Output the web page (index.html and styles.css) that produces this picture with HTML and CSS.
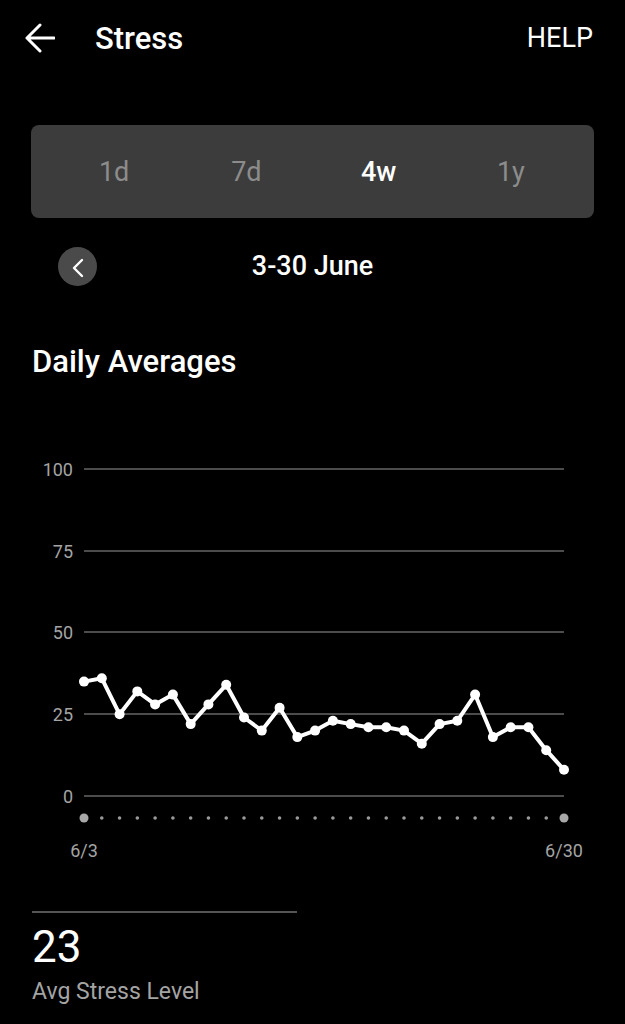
FILE: index.html
```html
<!DOCTYPE html>
<html lang="en">
<head>
  <meta charset="UTF-8" />
  <title>Stress</title>
  <link rel="stylesheet" href="styles.css">
</head>
<body>
  <header class="topbar">
    <svg class="back-icon" width="31" height="30" viewBox="0 0 31 30">
      <path d="M30 15H3M16 2L3 15l13 13" fill="none" stroke="#fff" stroke-width="3" stroke-linecap="round" stroke-linejoin="round" />
    </svg>
    <h1 class="title">Stress</h1>
    <span class="help">HELP</span>
  </header>

  <div class="range-tabs">
    <span class="tab">1d</span>
    <span class="tab">7d</span>
    <span class="tab active">4w</span>
    <span class="tab">1y</span>
  </div>

  <div class="date-nav">
    <span class="prev">
      <svg width="14" height="20" viewBox="0 0 14 20">
        <path d="M11 2L3 10l8 8" fill="none" stroke="#fff" stroke-width="2.4" stroke-linecap="round" stroke-linejoin="round" />
      </svg>
    </span>
    <span class="date-label">3-30 June</span>
  </div>

  <h2 class="section-title">Daily Averages</h2>

  <svg class="chart" width="625" height="480" viewBox="0 0 625 480">
    <defs>
      <marker id="pt" markerUnits="userSpaceOnUse" markerWidth="12" markerHeight="12" refX="6" refY="6">
        <circle cx="6" cy="6" r="5" fill="#fff" />
      </marker>
    </defs>
    <g class="grid">
      <line x1="84" y1="69" x2="564" y2="69" />
      <line x1="84" y1="151" x2="564" y2="151" />
      <line x1="84" y1="232" x2="564" y2="232" />
      <line x1="84" y1="314" x2="564" y2="314" />
      <line x1="84" y1="396" x2="564" y2="396" />
    </g>
    <g class="axis">
      <text x="73" y="75.5" text-anchor="end">100</text>
      <text x="73" y="157.5" text-anchor="end">75</text>
      <text x="73" y="238.5" text-anchor="end">50</text>
      <text x="73" y="320.5" text-anchor="end">25</text>
      <text x="73" y="402.5" text-anchor="end">0</text>
      <text x="84" y="457" text-anchor="middle">6/3</text>
      <text x="564" y="457" text-anchor="middle">6/30</text>
    </g>
    <line x1="84" y1="418" x2="564" y2="418" stroke="#9a9a9a" stroke-width="3.6" stroke-linecap="round" stroke-dasharray="0 17.7778" />
    <circle cx="84" cy="418" r="4.5" fill="#a8a8a8" />
    <circle cx="564" cy="418" r="4.5" fill="#a8a8a8" />
    <polyline class="series" marker-start="url(#pt)" marker-mid="url(#pt)" marker-end="url(#pt)"
      points="84,281.6 101.8,278.3 119.6,314.3 137.3,291.4 155.1,304.4 172.9,294.6 190.7,324.1 208.4,304.4 226.2,284.8 244,317.5 261.8,330.6 279.6,307.7 297.3,337.1 315.1,330.6 332.9,320.8 350.7,324.1 368.4,327.3 386.2,327.3 404,330.6 421.8,343.7 439.6,324.1 457.3,320.8 475.1,294.6 492.9,337.1 510.7,327.3 528.4,327.3 546.2,350.2 564,369.8" />
  </svg>

  <div class="summary">
    <div class="summary-value">23</div>
    <div class="summary-label">Avg Stress Level</div>
  </div>
</body>
</html>
```

FILE: styles.css
```css
* {
  box-sizing: border-box;
}

body {
  margin: 0;
  background-color: #000;
  color: #fff;
  font-family: Roboto, "Noto Sans", sans-serif;
}

.topbar {
  height: 76px;
  display: flex;
  align-items: center;
  padding: 0 32px 0 24px;
}

.back-icon {
  display: block;
}

.title {
  margin: 0 0 0 40px;
  font-size: 31px;
  font-weight: 500;
}

.help {
  margin-left: auto;
  font-size: 27px;
}

.range-tabs {
  margin: 49px 31px 0;
  height: 93px;
  padding: 0 17px;
  display: flex;
  align-items: center;
  background: #3c3c3c;
  border-radius: 8px;
}

.tab {
  flex: 1;
  text-align: center;
  font-size: 27px;
  color: #8c8c8c;
}

.tab.active {
  color: #fff;
  font-weight: 500;
}

.date-nav {
  margin: 24px 31px 0;
  height: 48px;
  display: grid;
  grid-template-columns: 1fr auto 1fr;
  align-items: center;
}

.prev {
  margin-left: 27px;
  width: 39px;
  height: 39px;
  border-radius: 50%;
  background: #4a4a4a;
  display: flex;
  align-items: center;
  justify-content: center;
}

.prev svg {
  display: block;
  margin-top: 3px;
}

.date-label {
  font-size: 27px;
  font-weight: 500;
}

.section-title {
  margin: 54px 0 0 32px;
  font-size: 31px;
  font-weight: 500;
  line-height: 36px;
}

.chart {
  display: block;
  margin-top: 20px;
}

.grid line {
  stroke: #4c4c4c;
  stroke-width: 2;
}

.axis text {
  font-family: Roboto, sans-serif;
  font-size: 18px;
  fill: #a4a4a4;
}

.series {
  fill: none;
  stroke: #fff;
  stroke-width: 4;
  stroke-linejoin: round;
}

.summary {
  margin: 31px 0 0 32px;
  width: 265px;
  border-top: 2px solid #555;
}

.summary-value {
  margin-top: 10px;
  font-size: 44px;
  line-height: 48px;
}

.summary-label {
  margin-top: 7px;
  font-size: 23px;
  line-height: 28px;
  color: #a4a4a4;
}
```
